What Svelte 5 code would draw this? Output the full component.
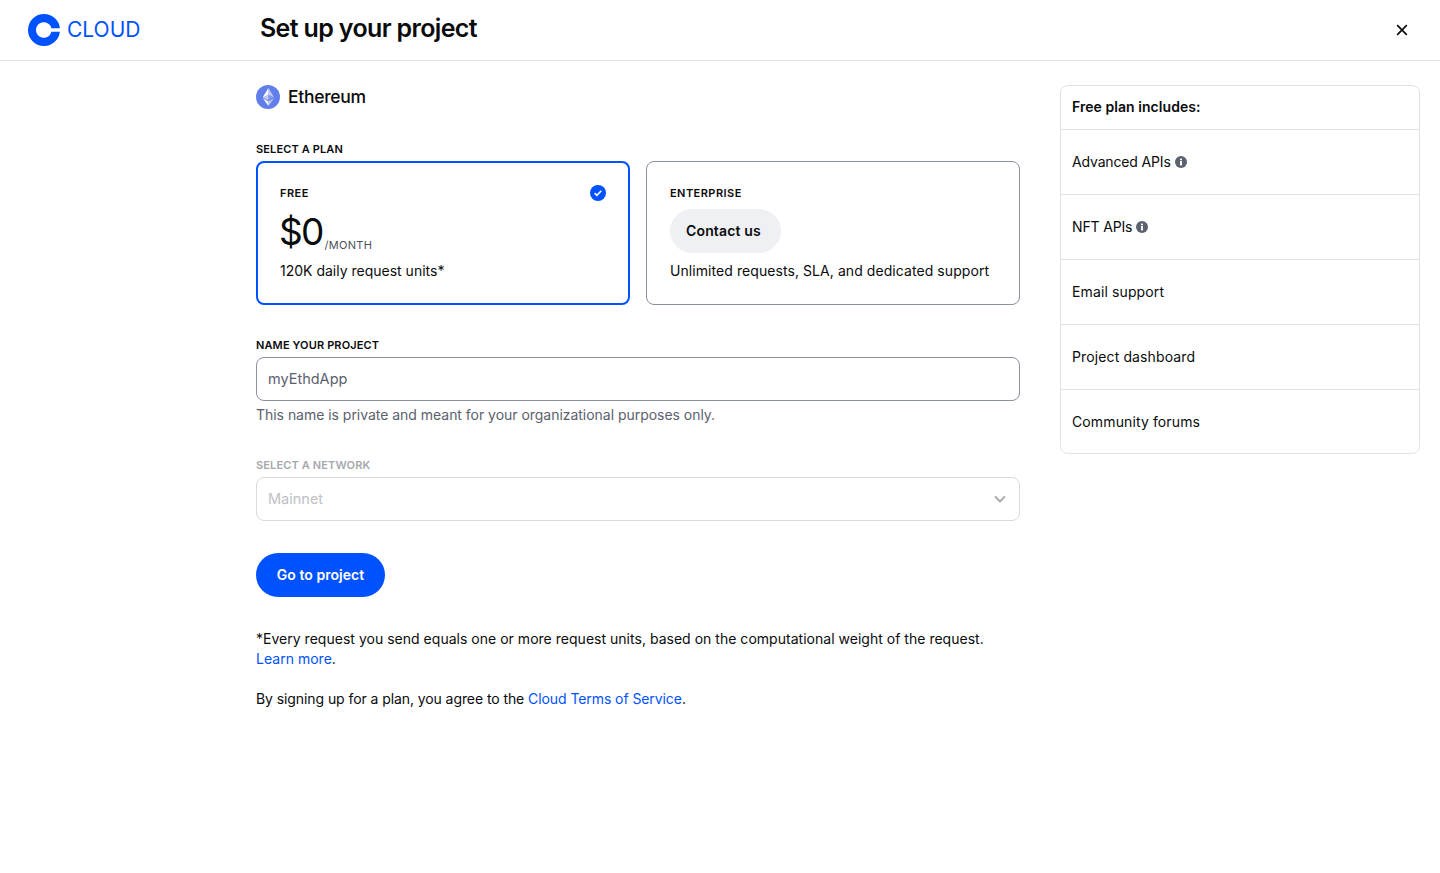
<script lang="ts">
	const features = [
		{ name: "Advanced APIs", info: true },
		{ name: "NFT APIs", info: true },
		{ name: "Email support", info: false },
		{ name: "Project dashboard", info: false },
		{ name: "Community forums", info: false },
	];
</script>

<div class="page">
	<header class="topbar">
		<div class="brand">
			<svg class="logo" width="32" height="32" viewBox="0 0 32 32" aria-hidden="true">
				<path
					fill="#0052ff"
					d="M16 0a16 16 0 1 0 15.9 17.8H23.4A7.8 7.8 0 1 1 23.4 14.2h8.5A16 16 0 0 0 16 0z"
				/>
			</svg>
			<span class="brand-name">CLOUD</span>
		</div>
		<h1>Set up your project</h1>
		<button class="close" aria-label="Close">
			<svg width="12" height="12" viewBox="0 0 12 12" aria-hidden="true">
				<path d="M1.2 1.2l9.6 9.6M10.8 1.2l-9.6 9.6" stroke="#0a0b0d" stroke-width="1.7" fill="none" />
			</svg>
		</button>
	</header>

	<main class="content">
		<section class="form">
			<div class="chain">
				<svg width="24" height="24" viewBox="0 0 24 24" aria-hidden="true">
					<circle cx="12" cy="12" r="12" fill="#627eea" />
					<path fill="#fff" fill-opacity=".6" d="M12.4 3v6.65l5.62 2.51z" />
					<path fill="#fff" d="M12.4 3l-5.63 9.16 5.63-2.51z" />
					<path fill="#fff" fill-opacity=".6" d="M12.4 16.48v4.52l5.63-7.79z" />
					<path fill="#fff" d="M12.4 21v-4.52l-5.63-3.27z" />
					<path fill="#fff" fill-opacity=".2" d="M12.4 15.43l5.62-3.27-5.62-2.51z" />
					<path fill="#fff" fill-opacity=".6" d="M6.77 12.16l5.63 3.27V9.65z" />
				</svg>
				<span>Ethereum</span>
			</div>

			<div class="label">SELECT A PLAN</div>
			<div class="plans">
				<div class="plan selected">
					<div class="plan-title">FREE</div>
					<svg class="check" width="16" height="16" viewBox="0 0 16 16" aria-hidden="true">
						<circle cx="8" cy="8" r="8" fill="#0052ff" />
						<path d="M4.6 8.2l2.3 2.2 4.4-4.6" stroke="#fff" stroke-width="1.6" fill="none" />
					</svg>
					<div class="price"><span class="amount">$0</span><span class="period">/MONTH</span></div>
					<div class="plan-text">120K daily request units*</div>
				</div>
				<div class="plan">
					<div class="plan-title">ENTERPRISE</div>
					<div class="price"><button class="contact">Contact us</button></div>
					<div class="plan-text wide">Unlimited requests, SLA, and dedicated support</div>
				</div>
			</div>

			<label class="label spaced" for="project">NAME YOUR PROJECT</label>
			<input id="project" class="field" placeholder="myEthdApp" />
			<div class="hint">This name is private and meant for your organizational purposes only.</div>

			<div class="label network muted">SELECT A NETWORK</div>
			<div class="field select">
				<span>Mainnet</span>
				<svg width="12" height="8" viewBox="0 0 12 8" aria-hidden="true">
					<path d="M1 1.4l5 5 5-5" stroke="#a6a8ac" stroke-width="2" fill="none" />
				</svg>
			</div>

			<button class="primary">Go to project</button>

			<p class="note first">
				*Every request you send equals one or more request units, based on the computational weight of the request.
				<a href="#learn">Learn more</a>.
			</p>
			<p class="note second">
				By signing up for a plan, you agree to the <a href="#terms">Cloud Terms of Service</a>.
			</p>
		</section>

		<aside class="includes">
			<div class="includes-head">Free plan includes:</div>
			{#each features as feature}
				<div class="feature" class:has-info={feature.info}>
					<span>{feature.name}</span>
					{#if feature.info}
						<svg width="12" height="12" viewBox="0 0 12 12" aria-hidden="true">
							<circle cx="6" cy="6" r="6" fill="#5b616e" />
							<rect x="5" y="5" width="2" height="4.4" fill="#fff" />
							<rect x="5" y="2.6" width="2" height="1.6" fill="#fff" />
						</svg>
					{/if}
				</div>
			{/each}
		</aside>
	</main>
</div>

<style>
	:global(body) {
		margin: 0;
		background: #fff;
		color: #0a0b0d;
		font-family: Inter, "Liberation Sans", sans-serif;
		font-size: 14.5px;
	}

	.page {
		min-height: 873px;
	}

	.topbar {
		display: flex;
		align-items: center;
		height: 60px;
		border-bottom: 1px solid #dee1e7;
	}

	.brand {
		display: flex;
		align-items: center;
		gap: 7px;
		width: 260px;
		padding-left: 28px;
		box-sizing: border-box;
	}

	.brand-name {
		color: #0052ff;
		font-size: 21px;
		line-height: 28px;
	}

	h1 {
		flex: 1;
		margin: 0 0 4px;
		font-size: 25px;
		line-height: 32px;
		font-weight: 600;
		letter-spacing: -0.65px;
	}

	.close {
		display: flex;
		margin-right: 32px;
		padding: 0;
		border: 0;
		background: none;
	}

	.content {
		display: flex;
		gap: 40px;
		padding: 24px 20px 0 256px;
	}

	.form {
		width: 764px;
	}

	.chain {
		display: flex;
		align-items: center;
		gap: 8px;
		height: 24px;
		margin-bottom: 32px;
		font-size: 17.5px;
		font-weight: 500;
		letter-spacing: -0.3px;
	}

	.chain span {
		margin-bottom: 1px;
	}

	.label {
		display: block;
		margin-bottom: 4px;
		font-size: 11px;
		line-height: 16px;
		font-weight: 600;
		letter-spacing: 0.13px;
	}

	.spaced {
		margin-top: 32px;
	}

	.network {
		margin-top: 32px;
	}

	.muted {
		color: #a6a8ac;
	}

	.plans {
		display: flex;
		gap: 16px;
	}

	.plan {
		position: relative;
		flex: 1;
		box-sizing: border-box;
		height: 144px;
		padding: 23px;
		border: 1px solid #89909e;
		border-radius: 8px;
	}

	.plan.selected {
		padding: 22px;
		border: 2px solid #0052ff;
	}

	.plan-title {
		font-size: 11px;
		line-height: 16px;
		font-weight: 600;
		letter-spacing: 0.45px;
	}

	.check {
		position: absolute;
		top: 22px;
		right: 22px;
	}

	.price {
		display: flex;
		align-items: flex-end;
		height: 44px;
		margin: 8px 0;
	}

	.amount {
		margin: 0 0 -1px -1px;
		font-size: 37px;
		line-height: 44px;
		letter-spacing: -1.8px;
	}

	.period {
		margin: 0 0 0 2px;
		color: #4a4f59;
		font-size: 11px;
		line-height: 16px;
		letter-spacing: 0.3px;
	}

	.plan-text {
		font-size: 14px;
		line-height: 20px;
	}

	.plan-text.wide {
		letter-spacing: 0.07px;
	}

	.contact {
		height: 44px;
		padding: 0 20px 2px 16px;
		border: 0;
		border-radius: 22px;
		background: #eef0f3;
		color: #0a0b0d;
		font: 600 14px Inter, "Liberation Sans", sans-serif;
		letter-spacing: 0.15px;
	}

	.field {
		display: block;
		box-sizing: border-box;
		width: 100%;
		height: 44px;
		padding: 0 11px 2px;
		border: 1px solid #89909e;
		border-radius: 8px;
		background: #fff;
		font: 14.5px Inter, "Liberation Sans", sans-serif;
	}

	.field::placeholder {
		color: #5b616e;
		opacity: 1;
	}

	.hint {
		margin-top: 4px;
		color: #5b616e;
		font-size: 14px;
		line-height: 20px;
		letter-spacing: -0.03px;
	}

	.select {
		display: flex;
		align-items: center;
		justify-content: space-between;
		padding: 0 13px 0 11px;
		border-color: #d8dade;
		color: #bfc1c5;
	}

	.select span {
		margin-bottom: 2px;
	}

	.primary {
		display: block;
		width: 129px;
		height: 44px;
		margin: 32px 0;
		padding: 0 0 2px;
		border: 0;
		border-radius: 22px;
		background: #0052ff;
		color: #fff;
		font: 600 14px Inter, "Liberation Sans", sans-serif;
		letter-spacing: 0.05px;
	}

	.note {
		margin: 0 0 20px;
		font-size: 14px;
		line-height: 20px;
	}

	.note.first {
		letter-spacing: 0.02px;
	}

	.note.second {
		letter-spacing: -0.08px;
	}

	.note a {
		color: #0052ff;
		text-decoration: none;
	}

	.includes {
		box-sizing: border-box;
		width: 360px;
		height: 369px;
		border: 1px solid #dee1e7;
		border-radius: 8px;
	}

	.includes-head {
		box-sizing: border-box;
		height: 43px;
		padding: 0 11px;
		font-size: 14px;
		font-weight: 600;
		line-height: 41px;
		letter-spacing: 0.05px;
	}

	.feature {
		display: flex;
		align-items: center;
		gap: 4px;
		box-sizing: border-box;
		height: 65px;
		padding: 0 11px;
		border-top: 1px solid #dee1e7;
		font-size: 14px;
		letter-spacing: 0.12px;
	}

	.feature span {
		margin-bottom: 2px;
	}

	.feature.has-info {
		letter-spacing: -0.15px;
	}

	.feature:last-child {
		height: 64px;
	}

	.feature:last-child span {
		margin-bottom: 0;
	}
</style>
